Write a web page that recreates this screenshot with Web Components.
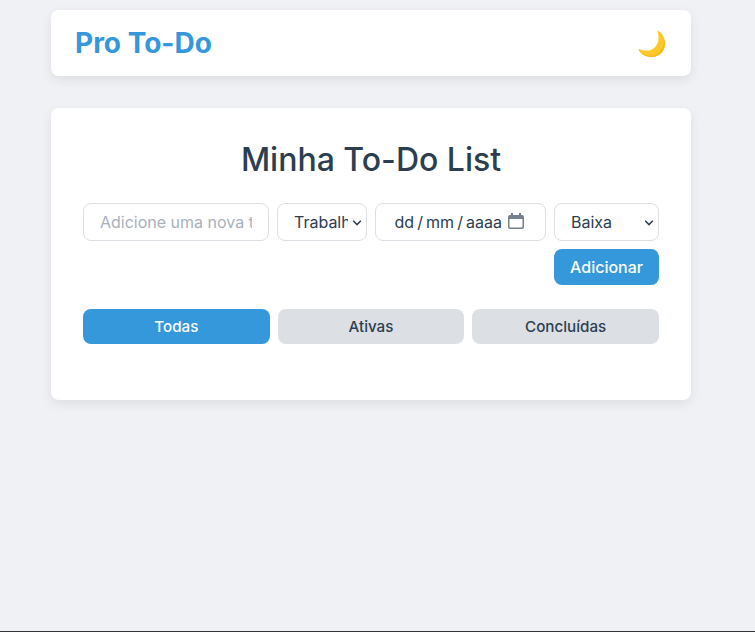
<!DOCTYPE html>
<html lang="pt-BR">
<head>
<meta charset="utf-8">
<title>Pro To-Do</title>
<style>
html,body{margin:0;height:100%}
body{background:#f0f1f5;color:#2c3e50;font-family:Inter,"Liberation Sans",sans-serif;font-size:16px;overflow:hidden}
</style>
</head>
<body>
<todo-app></todo-app>
<script>
const define = (name, html) => {
  const t = document.createElement('template');
  t.innerHTML = html;
  customElements.define(name, class extends HTMLElement {
    constructor() {
      super();
      this.attachShadow({mode: 'open'}).append(t.content.cloneNode(true));
    }
  });
};

define('moon-icon', `<style>:host{display:block;width:28px;height:28px}svg{display:block}</style>
<svg width="28" height="28" viewBox="0 0 28 28"><path d="M20.5 1.1C23.6 2.7 27 7.3 27 13.6C27 21.4 21.2 27 13.6 27C8 27 2.8 24.2.8 20.2C.4 19.2 1 18.8 1.9 19.2C4 20.2 7.2 21 10.8 20.4C18.4 19.2 22.6 10.6 19.7 2.2C19.4 1.2 19.7.7 20.5 1.1Z" fill="#ffc828"/><path d="M25.3 8.2C27.2 16.5 22 25 13.2 25.6C8.5 25.9 4.3 23.8 1.5 21.3C4.2 25 8.6 27 13.6 27C21.2 27 27 21.4 27 13.6C27 11.5 26.2 9.2 25.3 8.2Z" fill="#f9b720"/></svg>`);

define('app-header', `<style>:host{display:flex;box-sizing:border-box;height:66px;padding:0 24px;align-items:center;justify-content:space-between;background:#fff;border-radius:8px;box-shadow:0 4px 12px rgba(0,0,0,.08)}
h1{margin:0;font-size:28px;font-weight:700;line-height:34px;color:#3498db}moon-icon{margin:2px 1px 0 0}</style>
<h1><slot></slot></h1><moon-icon></moon-icon>`);

define('field-box', `<style>:host{display:flex;box-sizing:border-box;height:38px;padding:0 16px;border:1px solid #dcdfe4;border-radius:8px;background:#fff;align-items:center;min-width:0}
.text{overflow:hidden;white-space:nowrap;line-height:20px;min-width:0;flex:1}
::slotted([slot=end]){flex:none}</style><div class="text"><slot></slot></div><slot name="end"></slot>`);

define('chevron-icon', `<style>:host{display:block;width:10px;height:6px}svg{display:block}</style>
<svg width="10" height="6" viewBox="0 0 10 6"><path d="M1.2 .8L5 4.6L8.8 .8" fill="none" stroke="#2c3e50" stroke-width="1.5"/></svg>`);

define('calendar-icon', `<style>:host{display:block;width:16px;height:16px}svg{display:block}</style>
<svg width="16" height="16" viewBox="0 0 16 16"><path fill="#75808c" fill-rule="evenodd" d="M2 2H3V0H5V2H11V0H13V2H14Q16 2 16 4V14Q16 16 14 16H2Q0 16 0 14V4Q0 2 2 2ZM1.5 6V13.7Q1.5 14.5 2.3 14.5H13.7Q14.5 14.5 14.5 13.7V6Z"/></svg>`);

define('todo-button', `<style>:host{display:flex;box-sizing:border-box;align-items:center;justify-content:center;height:36px;border-radius:8px;background:#dcdfe4;font-weight:500;line-height:20px}
:host([primary]){background:#3498db;color:#fff}</style><slot></slot>`);

define('todo-form', `<style>:host{display:grid;grid-template-columns:186px 90px 171px 105px;gap:8px}
todo-button{grid-column:4}
input{display:block;width:100%;height:20px;padding:0;border:0;outline:0;background:none;font:inherit;line-height:20px;color:inherit}
input::placeholder{color:#a9b1bb;opacity:1}
.sel{padding:0 4px 0 16px}
.sel chevron-icon{margin-left:4px;margin-top:1px}
.date{padding:0 21px 0 18.5px}
.date span{margin-right:3.1px}
calendar-icon{margin-bottom:2px}</style>
<field-box><input placeholder="Adicione uma nova tarefa..."></field-box>
<field-box class="sel">Trabalho<chevron-icon slot="end"></chevron-icon></field-box>
<field-box class="date"><span>dd</span><span>/</span><span>mm</span><span>/</span><span>aaaa</span><calendar-icon slot="end"></calendar-icon></field-box>
<field-box class="sel">Baixa<chevron-icon slot="end"></chevron-icon></field-box>
<todo-button primary>Adicionar</todo-button>`);

define('todo-filters', `<style>:host{display:grid;grid-template-columns:repeat(3,1fr);gap:8px;margin-top:24px}todo-button{height:35px;font-size:15.2px}</style>
<todo-button primary>Todas</todo-button><todo-button>Ativas</todo-button><todo-button>Concluídas</todo-button>`);

define('todo-card', `<style>:host{display:block;box-sizing:border-box;height:292px;margin-top:32px;padding:32px;background:#fff;border-radius:8px;box-shadow:0 4px 12px rgba(0,0,0,.08)}
h2{margin:0 0 24px;font-size:32px;font-weight:500;line-height:39px;text-align:center}</style>
<h2>Minha To-Do List</h2><todo-form></todo-form><todo-filters></todo-filters>`);

define('todo-app', `<style>:host{display:block;box-sizing:border-box;height:632px;padding:10px 64px 0 51px;border-bottom:1px solid #333438}</style>
<app-header>Pro To-Do</app-header><todo-card></todo-card>`);
</script>
</body>
</html>
